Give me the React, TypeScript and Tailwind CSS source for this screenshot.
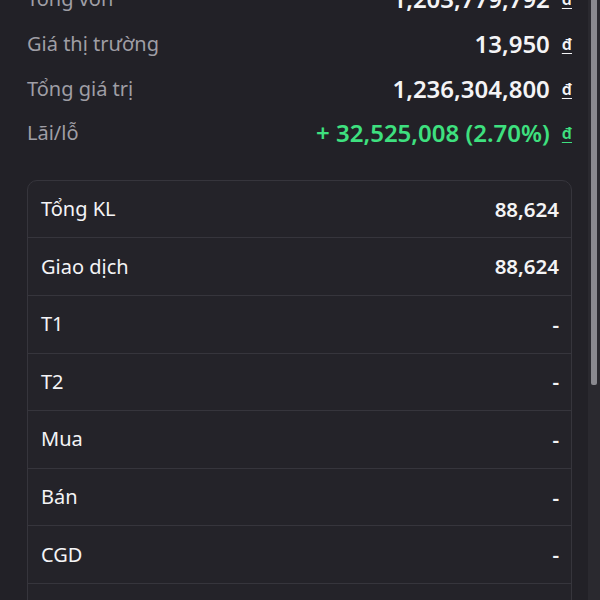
import React from 'react';

const summary = [
  { label: 'Tổng vốn', value: '1,203,779,792', tone: 'white' },
  { label: 'Giá thị trường', value: '13,950', tone: 'white' },
  { label: 'Tổng giá trị', value: '1,236,304,800', tone: 'white' },
  { label: 'Lãi/lỗ', value: '+ 32,525,008 (2.70%)', tone: 'green' },
];

const details = [
  { label: 'Tổng KL', value: '88,624' },
  { label: 'Giao dịch', value: '88,624' },
  { label: 'T1', value: '-' },
  { label: 'T2', value: '-' },
  { label: 'Mua', value: '-' },
  { label: 'Bán', value: '-' },
  { label: 'CGD', value: '-' },
  { label: 'Cầm cố', value: '-' },
];

function SummaryRow({ label, value, tone }: { label: string; value: string; tone: string }) {
  const color = tone === 'green' ? 'text-[#3ee07f]' : 'text-[#f4f4f6]';
  return (
    <div className="flex h-[44.7px] items-center justify-between">
      <span className="text-[20px] text-[#9f9ea5]">{label}</span>
      <div className={`flex items-center gap-[12px] ${color}`}>
        <span className="text-[24px] font-semibold">{value}</span>
        <span className="text-[16px] font-semibold underline underline-offset-[3px]">đ</span>
      </div>
    </div>
  );
}

export default function App() {
  return (
    <div
      className="flex h-[600px] w-[600px] overflow-hidden bg-[#222127]"
      style={{ fontFamily: '"Noto Sans", sans-serif' }}
    >
      <div className="flex-1 pl-[27px] pr-[16px]">
        <div className="mt-[-23px]">
          {summary.map((row) => (
            <SummaryRow key={row.label} {...row} />
          ))}
        </div>
        <div className="mt-[24px] overflow-hidden rounded-[10px] border border-[#36353c] bg-[#242329]">
          {details.map((row) => (
            <div
              key={row.label}
              className="flex h-[57.6px] items-center justify-between border-b border-[#36353c] pl-[13px] pr-[12px] text-[#f4f4f6]"
            >
              <span className="text-[20px]">{row.label}</span>
              <span className="text-[20.5px] font-semibold">{row.value}</span>
            </div>
          ))}
        </div>
      </div>
      <div className="w-[12px] bg-[#2a292f] pl-[3px] pr-[3px]">
        <div className="h-[385px] w-[6px] rounded-b-[2px] bg-[#8a898f]" />
      </div>
    </div>
  );
}
